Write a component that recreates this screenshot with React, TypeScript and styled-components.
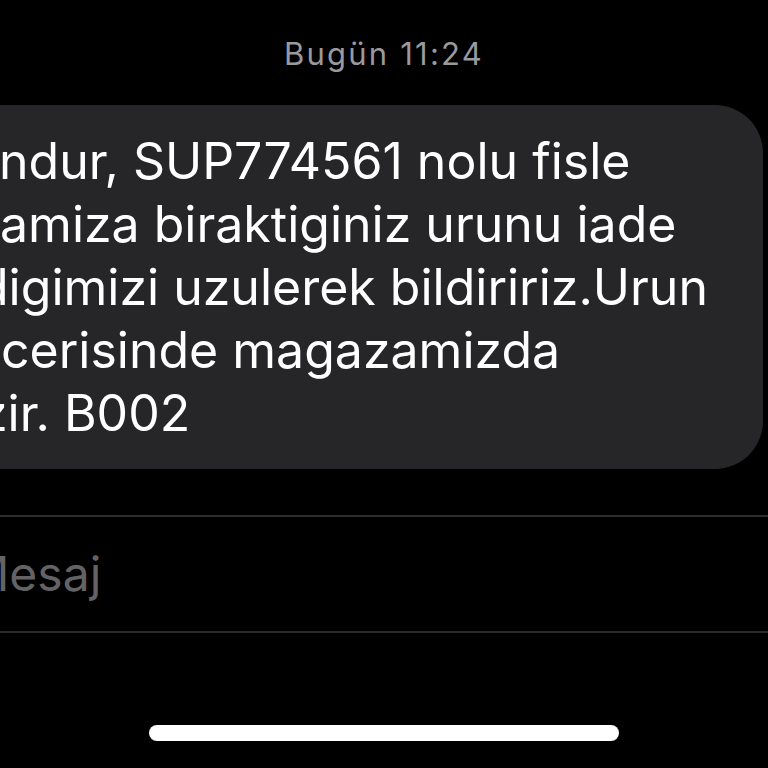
import React from "react";
import styled, { createGlobalStyle } from "styled-components";

const Global = createGlobalStyle`
  html, body {
    margin: 0;
    padding: 0;
    background: #000;
  }
  body {
    font-family: Inter, "Noto Sans", sans-serif;
    -webkit-font-smoothing: antialiased;
  }
`;

const Screen = styled.div`
  width: 768px;
  height: 768px;
  background: #000;
  overflow: hidden;
  display: flex;
  flex-direction: column;
`;

const Timestamp = styled.div`
  padding-top: 36px;
  text-align: center;
  font-size: 31px;
  line-height: 36px;
  font-weight: 400;
  color: #9a9a9e;
  letter-spacing: 2.2px;
`;

const Thread = styled.div`
  margin-top: 33px;
  display: flex;
`;

const Bubble = styled.div`
  margin-left: -80px;
  width: 843px;
  box-sizing: border-box;
  padding: 25px 0 24px 80px;
  background: #262628;
  border-radius: 48px;
  color: #fff;
  font-size: 50px;
  line-height: 63px;
  font-weight: 400;
`;

const Line = styled.div<{ $shift: number }>`
  white-space: nowrap;
  margin-left: ${(p) => p.$shift}px;
`;

const Composer = styled.div`
  margin-top: 46px;
  margin-left: -120px;
  margin-right: -120px;
  height: 114px;
  border: 2px solid #2c2c2e;
  border-radius: 60px;
  display: flex;
  align-items: center;
  padding-left: 84px;
`;

const Placeholder = styled.span`
  font-size: 48px;
  line-height: 58px;
  color: #636366;
`;

const HomeBar = styled.div`
  margin: 92px auto 0;
  width: 470px;
  height: 16px;
  border-radius: 8px;
  background: #fff;
`;

const lines: { text: string; shift: number }[] = [
  { text: "ndur, SUP774561 nolu fisle", shift: -1 },
  { text: "amiza biraktiginiz urunu iade", shift: 0 },
  { text: "digimizi uzulerek bildiririz.Urun", shift: -22 },
  { text: "cerisinde magazamizda", shift: 1 },
  { text: "zir. B002", shift: -20 },
];

export default function App() {
  return (
    <Screen>
      <Global />
      <Timestamp>Bugün 11:24</Timestamp>
      <Thread>
        <Bubble>
          {lines.map((l, i) => (
            <Line key={i} $shift={l.shift}>
              {l.text}
            </Line>
          ))}
        </Bubble>
      </Thread>
      <Composer>
        <Placeholder>Mesaj</Placeholder>
      </Composer>
      <HomeBar />
    </Screen>
  );
}
